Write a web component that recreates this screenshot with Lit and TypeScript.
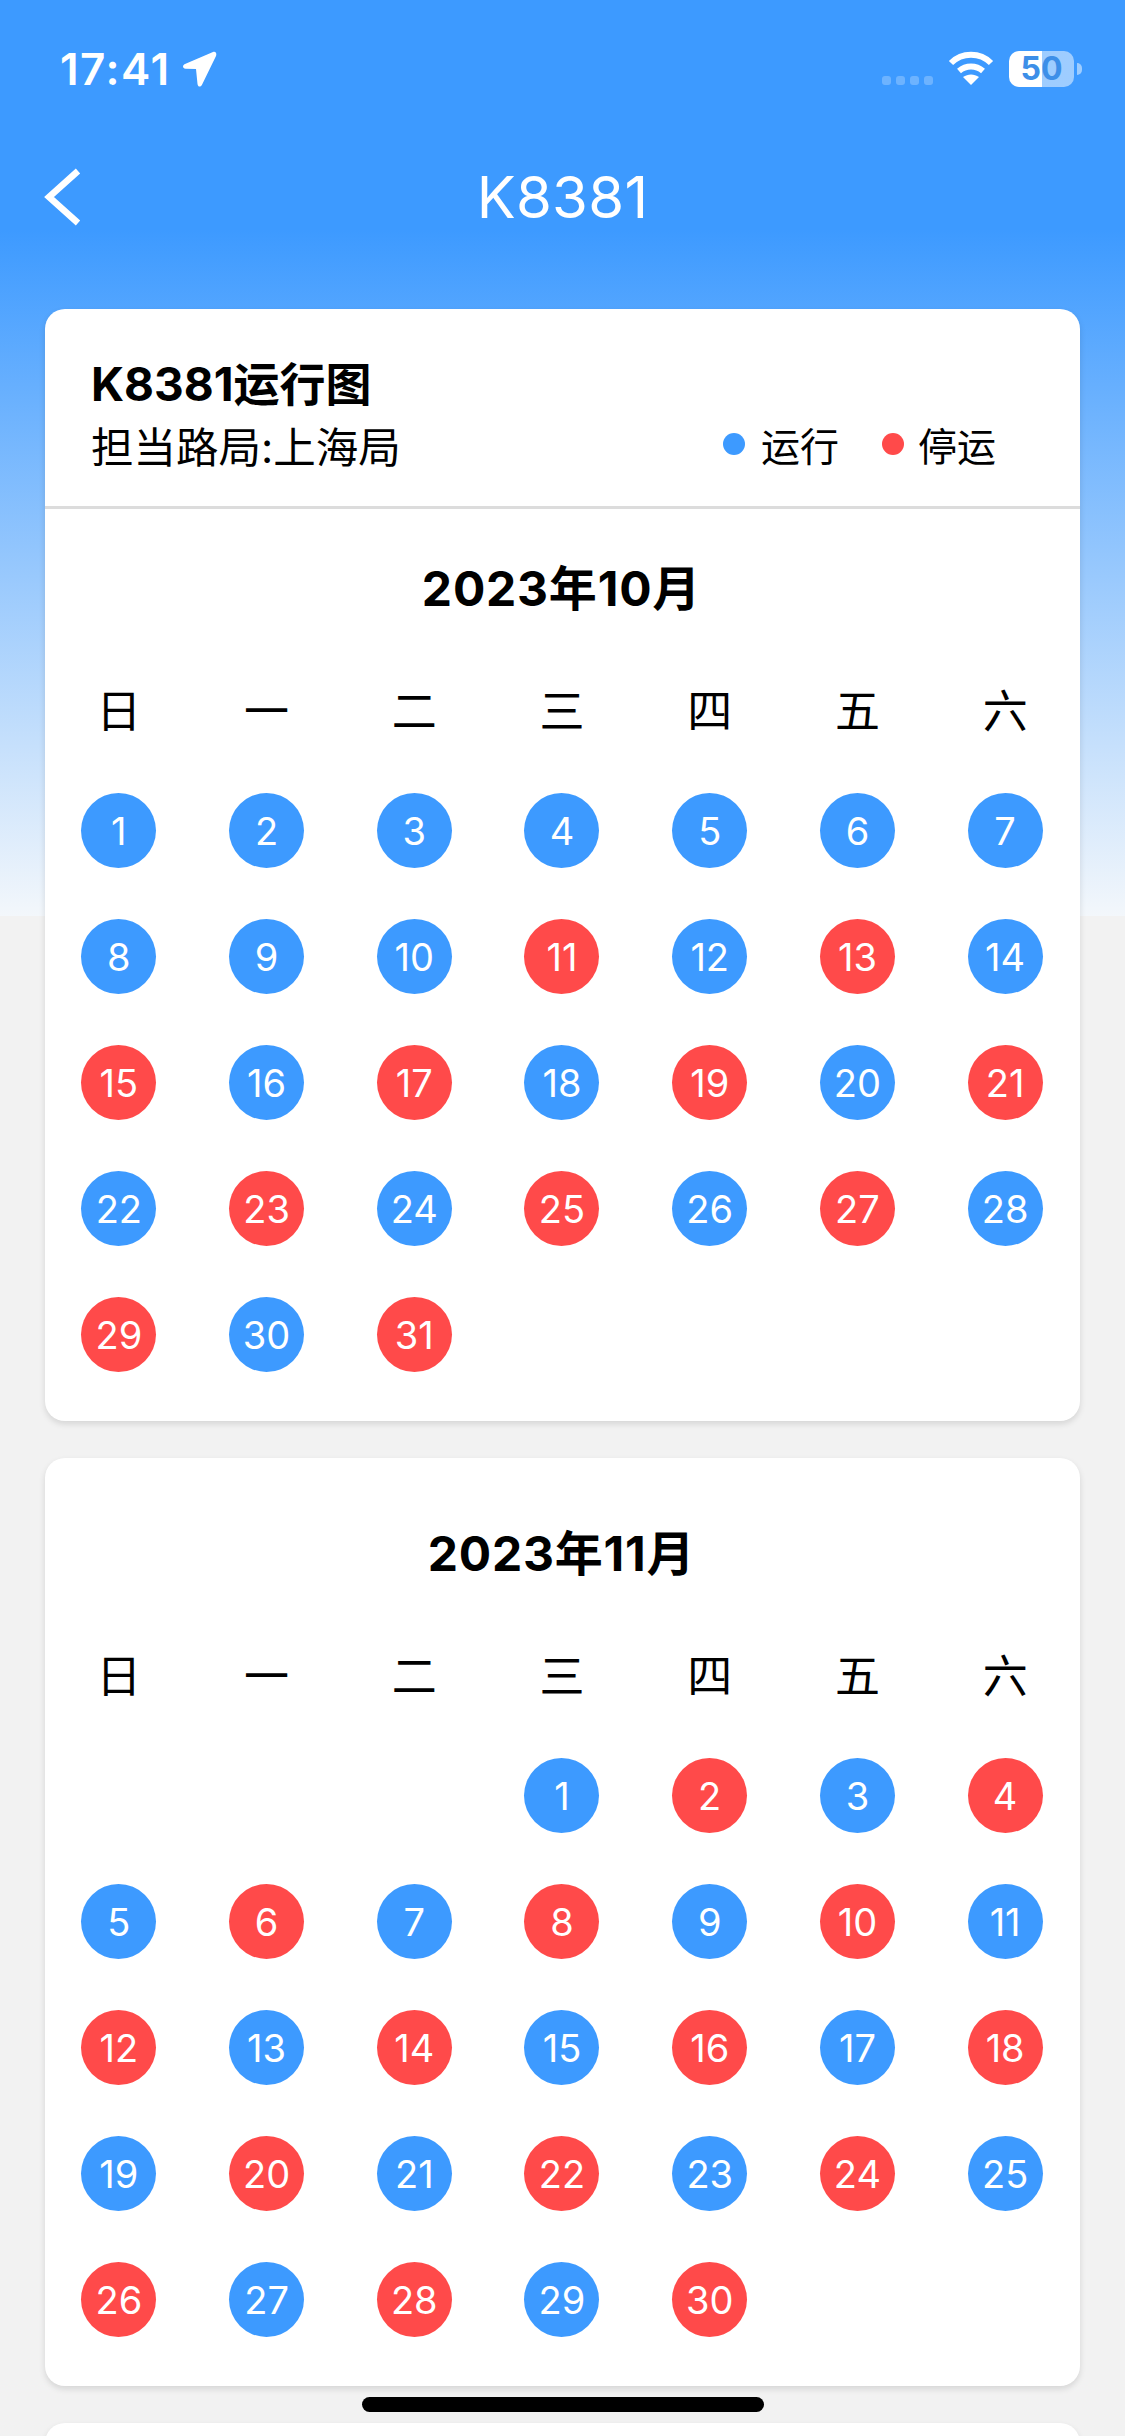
import { LitElement, html, css, svg } from 'lit';
import { customElement } from 'lit/decorators.js';

type Month = { title: string; lead: number; days: number; stopped: number[] };

// 停运 days per month, everything else is 运行
const OCT_STOP = [11, 13, 15, 17, 19, 21, 23, 25, 27, 29, 31];
const NOV_STOP = [2, 4, 6, 8, 10, 12, 14, 16, 18, 20, 22, 24, 26, 28, 30];

const MONTHS: Month[] = [
    { title: '2023年10月', lead: 0, days: 31, stopped: OCT_STOP },
    { title: '2023年11月', lead: 3, days: 30, stopped: NOV_STOP },
];

const WEEK = ['日', '一', '二', '三', '四', '五', '六'];

@customElement('app-root')
export class AppRoot extends LitElement {
    static styles = css`
        :host {
            display: block;
            position: relative;
            width: 1125px;
            height: 2436px;
            overflow: hidden;
            background: #f2f2f2 linear-gradient(#3d9aff 0, #3d9aff 230px, #f3f7fb 916px) no-repeat;
            background-size: 100% 916px;
            font-family: Inter, 'Noto Sans CJK SC', sans-serif;
            color: #000;
        }

        .status {
            height: 132px;
            box-sizing: border-box;
            padding: 51px 43px 0 60px;
            display: flex;
            align-items: flex-start;
            color: #fff;
        }
        .time {
            font-size: 44px;
            line-height: 36px;
            font-weight: 600;
            letter-spacing: 1.5px;
        }
        .arrow {
            margin-left: 11px;
            width: 35px;
            height: 36px;
        }
        .status-right {
            margin-left: auto;
            display: flex;
            align-items: flex-start;
        }
        .cell-dots {
            display: flex;
            gap: 5px;
            margin-top: 25px;
            margin-right: 15px;
        }
        .cell-dots span {
            width: 9px;
            height: 9px;
            border-radius: 3px;
            background: rgba(255, 255, 255, 0.25);
        }
        .wifi {
            width: 46px;
            height: 34px;
            margin-right: 15px;
        }
        .battery {
            width: 65px;
            height: 36px;
            border-radius: 10px;
            background: linear-gradient(90deg, #fff 0, #fff 33px, rgba(255, 255, 255, 0.5) 33px);
            color: #3d8fe8;
            font-size: 32px;
            line-height: 36px;
            font-weight: 700;
            text-align: center;
        }
        .nub {
            width: 5px;
            height: 12px;
            margin: 12px 0 0 3px;
            border-radius: 0 6px 6px 0;
            background: rgba(255, 255, 255, 0.5);
        }

        .nav {
            height: 130px;
            display: flex;
            align-items: center;
            justify-content: center;
            position: relative;
            color: #fff;
            font-size: 58px;
            letter-spacing: 0.3px;
        }
        .back {
            position: absolute;
            left: 42px;
            top: 36px;
            width: 42px;
            height: 58px;
        }

        .cards {
            padding: 47px 45px 0;
            display: flex;
            flex-direction: column;
            gap: 37px;
        }
        .card {
            background: #fff;
            border-radius: 20px;
            box-shadow: 0 3px 6px rgba(0, 0, 0, 0.12);
            padding-bottom: 49px;
        }
        .card.stub {
            height: 300px;
        }
        .head {
            height: 200px;
            box-sizing: border-box;
            border-bottom: 3px solid #dcdcdc;
            padding: 45px 45px 0 46px;
        }
        .head h1 {
            margin: 0;
            font-size: 46px;
            line-height: 60px;
            font-weight: 700;
        }
        .head-row {
            display: flex;
            align-items: center;
            height: 60px;
            font-size: 42.5px;
        }
        .legend {
            margin-left: auto;
            margin-right: 39px;
            display: flex;
            align-items: center;
            font-size: 39px;
        }
        .dot {
            width: 22px;
            height: 22px;
            border-radius: 50%;
            margin-right: 16px;
        }
        .legend .label + .dot {
            margin-left: 43px;
            margin-right: 14px;
        }

        .month-title {
            margin: 0;
            text-align: center;
            font-size: 48px;
            line-height: 60px;
            font-weight: 700;
            letter-spacing: 0.8px;
            padding-right: 2px;
            padding-top: 66px;
        }
        .head + .month .month-title {
            padding-top: 50px;
        }
        .grid {
            display: grid;
            grid-template-columns: repeat(7, 1fr);
            justify-items: center;
            padding-right: 1px;
        }
        .week {
            margin-top: 63px;
            height: 60px;
            line-height: 60px;
            font-size: 45px;
        }
        .days {
            margin-top: 51px;
            row-gap: 51px;
        }
        .day {
            width: 75px;
            height: 75px;
            border-radius: 50%;
            display: flex;
            align-items: center;
            justify-content: center;
            color: #fff;
            font-size: 38px;
            font-weight: 380;
        }
        .run {
            background: #3d9aff;
        }
        .stop {
            background: #ff4a4a;
        }

        .home {
            position: absolute;
            left: 362px;
            top: 2397px;
            width: 402px;
            height: 15px;
            border-radius: 8px;
            background: #000;
        }
    `;

    private renderMonth(m: Month) {
        const days = Array.from({ length: m.days }, (_, i) => i + 1);
        return html`
            <div class="month">
                <h2 class="month-title">${m.title}</h2>
                <div class="grid week">${WEEK.map((w) => html`<span>${w}</span>`)}</div>
                <div class="grid days">
                    ${Array.from({ length: m.lead }, () => html`<span></span>`)}
                    ${days.map((d) => html`<span class="day ${m.stopped.includes(d) ? 'stop' : 'run'}">${d}</span>`)}
                </div>
            </div>
        `;
    }

    render() {
        return html`
            <div class="status">
                <span class="time">17:41</span>
                <svg class="arrow" viewBox="0 0 35 36">
                    <path fill="#fff" d="M31 1 3 13c-3 1.400-2.400 4.600.6 4.700L14 18l1.500 15c.3 3 3.300 3.500 4.500.8L34 5c1-3-.5-5-3-4Z" />
                </svg>
                <div class="status-right">
                    <div class="cell-dots"><span></span><span></span><span></span><span></span></div>
                    <svg class="wifi" viewBox="0 0 46 34">
                        ${svg`<g fill="none" stroke="#fff" stroke-width="6">
                            <path d="M3 12C14 1 32 1 43 12" />
                            <path d="M11 20c7-6 17-6 24 0" />
                        </g>
                        <path fill="#fff" d="M23 34 15 26c5-3.500 11-3.500 16 0Z" />`}
                    </svg>
                    <div class="battery">50</div>
                    <div class="nub"></div>
                </div>
            </div>
            <div class="nav">
                <svg class="back" viewBox="0 0 42 58">
                    <path fill="none" stroke="#fff" stroke-width="6.500" d="M36 3 7 29l29 26" />
                </svg>
                K8381
            </div>
            <div class="cards">
                <div class="card">
                    <div class="head">
                        <h1>K8381运行图</h1>
                        <div class="head-row">
                            <span>担当路局:上海局</span>
                            <div class="legend">
                                <span class="dot run"></span><span class="label">运行</span>
                                <span class="dot stop"></span><span class="label">停运</span>
                            </div>
                        </div>
                    </div>
                    ${this.renderMonth(MONTHS[0])}
                </div>
                <div class="card">${this.renderMonth(MONTHS[1])}</div>
                <div class="card stub"></div>
            </div>
            <div class="home"></div>
        `;
    }
}
